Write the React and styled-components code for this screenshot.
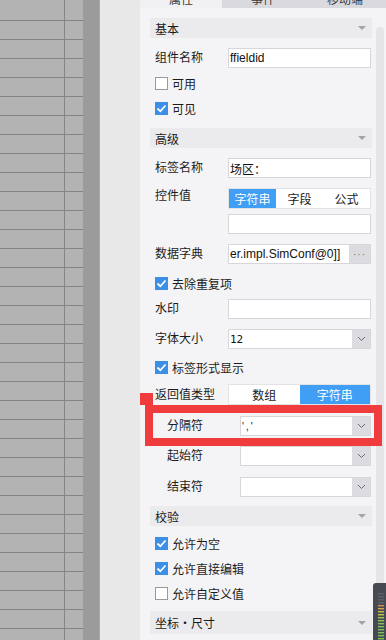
import React from 'react';
import styled, { createGlobalStyle } from 'styled-components';

const GlobalStyle = createGlobalStyle`
  html, body {
    margin: 0;
    padding: 0;
  }
  body {
    font-family: "Liberation Sans", "Noto Sans CJK SC", sans-serif;
  }
`;

const FONT = '"Liberation Sans", "Noto Sans CJK SC", sans-serif';
const BLUE = '#409ef5';

const Page = styled.div`
  position: relative;
  display: flex;
  width: 386px;
  height: 640px;
  overflow: hidden;
  background: #e8e8e8;
  font-family: ${FONT};
  font-size: 12px;
  color: #1c1c1c;
`;

const Sheet = styled.div`
  width: 83px;
  flex-shrink: 0;
  display: flex;
  flex-direction: column;
  background: #b3b3b3;
`;

const SheetRow = styled.div`
  display: flex;
  flex-shrink: 0;
  height: ${(p) => (p.$first ? 20 : 18)}px;
  border-bottom: 1px solid #858585;
`;

const SheetCell = styled.div`
  width: ${(p) => p.$w}px;
  flex-shrink: 0;
  border-right: ${(p) => (p.$line ? '1px solid #858585' : 'none')};
`;

const Strip = styled.div`
  width: 16px;
  flex-shrink: 0;
  background: #9b9b9b;
  border-right: 1px solid #a9a9a9;
`;

const Gutter = styled.div`
  width: 40px;
  flex-shrink: 0;
  background: #e8e8e8;
`;

const Panel = styled.div`
  flex: 1;
  display: flex;
  flex-direction: column;
  background: #f4f4f6;
  min-width: 0;
`;

const Tabs = styled.div`
  display: flex;
  height: 8px;
  flex-shrink: 0;
`;

const Tab = styled.div`
  flex: 1;
  display: flex;
  justify-content: center;
  align-items: flex-end;
  overflow: hidden;
  background: ${(p) => (p.$active ? '#f1f1f3' : '#dadade')};
  color: #3a3a3a;
  span {
    line-height: 12px;
    margin-bottom: 2px;
    white-space: nowrap;
  }
`;

const Body = styled.div`
  flex: 1;
  display: flex;
  min-height: 0;
`;

const Content = styled.div`
  width: 222px;
  padding: 0 4px 0 10px;
  display: flex;
  flex-direction: column;
`;

const ScrollTrack = styled.div`
  width: 8px;
  margin-top: 19px;
  background: #e5e5e8;
  border-radius: 4px 4px 0 0;
`;

const Header = styled.div`
  height: ${(p) => p.$h || 20}px;
  margin-top: ${(p) => p.$mt}px;
  flex-shrink: 0;
  display: flex;
  align-items: center;
  justify-content: space-between;
  padding: 0 6px 0 5px;
  background: #ebebed;
  color: #1a1a1a;
`;

const Caret = styled.span`
  width: 0;
  height: 0;
  border-left: 4px solid transparent;
  border-right: 4px solid transparent;
  border-top: 4px solid #a4a4a6;
`;

const FieldRow = styled.div`
  display: flex;
  align-items: ${(p) => (p.$top ? 'flex-start' : 'center')};
  margin-top: ${(p) => p.$mt}px;
  padding: 0 1px 0 ${(p) => (p.$indent ? 17 : 5)}px;
  flex-shrink: 0;
`;

const Label = styled.div`
  width: 73px;
  flex-shrink: 0;
  line-height: 14px;
  margin-top: ${(p) => (p.$top ? 1 : 0)}px;
  white-space: nowrap;
`;

const InputBox = styled.div`
  flex: 1;
  height: 20px;
  box-sizing: border-box;
  display: flex;
  align-items: center;
  border: 1px solid #d7d7db;
  background: #fff;
  overflow: hidden;
  min-width: 0;
`;

const InputText = styled.span`
  flex: 1;
  padding-left: ${(p) => (p.$pad ?? 1)}px;
  white-space: nowrap;
  overflow: hidden;
  font-size: ${(p) => p.$size || 12}px;
  font-family: ${(p) => p.$font || FONT};
  letter-spacing: ${(p) => p.$spacing || 0}px;
  color: #111;
`;

const SideButton = styled.div`
  width: ${(p) => p.$w || 18}px;
  height: 18px;
  flex-shrink: 0;
  display: flex;
  align-items: center;
  justify-content: center;
  background: #dcdce0;
  color: #777;
  font-size: 10px;
  letter-spacing: 1px;
`;

const Toggle = styled.div`
  flex: 1;
  height: 21px;
  box-sizing: border-box;
  display: flex;
  border: 1px solid #e3e3e6;
  background: #fff;
`;

const Segment = styled.div`
  flex: 1;
  display: flex;
  align-items: center;
  justify-content: center;
  background: ${(p) => (p.$active ? BLUE : '#fff')};
  color: ${(p) => (p.$active ? '#fff' : '#1a1a1a')};
`;

const CheckRow = styled.div`
  display: flex;
  align-items: center;
  gap: 4px;
  height: 13px;
  margin-top: ${(p) => p.$mt}px;
  padding-left: 5px;
  flex-shrink: 0;
  white-space: nowrap;
`;

const Box = styled.span`
  width: 13px;
  height: 13px;
  box-sizing: border-box;
  flex-shrink: 0;
  display: flex;
  align-items: center;
  justify-content: center;
  background: ${(p) => (p.$on ? '#3b8fe6' : '#fff')};
  border: 1px solid ${(p) => (p.$on ? '#3b8fe6' : '#9a9a9c')};
`;

const Annotation = styled.div`
  position: absolute;
  left: 145px;
  top: 405px;
  width: 237px;
  height: 41px;
  box-sizing: border-box;
  border: 8px solid #f03c3c;
  pointer-events: none;
`;

const AnnotationTab = styled.div`
  position: absolute;
  left: 140px;
  top: 393px;
  width: 13px;
  height: 12px;
  background: #f03c3c;
`;

const Meter = styled.div`
  position: absolute;
  left: 373px;
  top: 583px;
  width: 13px;
  height: 57px;
  background: #474a52;
  border-radius: 3px 0 0 0;
`;

const Chevron = () => (
  <svg width="9" height="6" viewBox="0 0 9 6">
    <path d="M1 1l3.5 3.5L8 1" fill="none" stroke="#6c6c6e" strokeWidth="1" />
  </svg>
);

const Tick = () => (
  <svg width="11" height="9" viewBox="0 0 11 9">
    <path d="M1.5 4.5l2.8 2.8L9.5 1.5" fill="none" stroke="#fff" strokeWidth="1.8" />
  </svg>
);

const Check = ({ on, text, mt }) => (
  <CheckRow $mt={mt}>
    <Box $on={on}>{on && <Tick />}</Box>
    <span>{text}</span>
  </CheckRow>
);

const Field = ({ label, mt, indent, children }) => (
  <FieldRow $mt={mt} $indent={indent}>
    <Label>{label}</Label>
    {children}
  </FieldRow>
);

const Select = ({ value, size, font, spacing }) => (
  <InputBox>
    <InputText $size={size} $font={font} $spacing={spacing}>{value}</InputText>
    <SideButton>
      <Chevron />
    </SideButton>
  </InputBox>
);

const meterColors = [
  '#5d6068', '#5d6068', '#5d6068', '#5d6068',
  '#d98c48', '#d9a14a', '#cbbf4a', '#c4c64c', '#a9c653',
  '#8fc457', '#7fc25a', '#7fc25a', '#7fc25a', '#7fc25a', '#7fc25a', '#7fc25a',
];

const LevelMeter = () => (
  <Meter>
    <svg width="13" height="57" viewBox="0 0 13 57">
      {meterColors.map((c, i) => (
        <rect key={i} x="5" y={10 + i * 3} width="6" height="1.4" fill={c} />
      ))}
    </svg>
  </Meter>
);

const sheetRows = Array.from({ length: 34 }, (_, i) => i);

export default function App() {
  return (
    <>
      <GlobalStyle />
      <Page>
        <Sheet>
          {sheetRows.map((i) => (
            <SheetRow key={i} $first={i === 0}>
              <SheetCell $w={64} $line />
              <SheetCell $w={19} />
            </SheetRow>
          ))}
        </Sheet>
        <Strip />
        <Gutter />
        <Panel>
          <Tabs>
            <Tab $active><span>属性</span></Tab>
            <Tab><span>事件</span></Tab>
            <Tab><span>移动端</span></Tab>
          </Tabs>
          <Body>
            <Content>
              <Header $mt={10}>基本<Caret /></Header>
              <Field label="组件名称" mt={10}>
                <InputBox><InputText>ffieldid</InputText></InputBox>
              </Field>
              <Check text="可用" mt={9} />
              <Check on text="可见" mt={12} />

              <Header $mt={13}>高级<Caret /></Header>
              <Field label="标签名称" mt={10}>
                <InputBox><InputText>场区：</InputText></InputBox>
              </Field>
              <FieldRow $mt={10} $top>
                <Label $top>控件值</Label>
                <Toggle>
                  <Segment $active>字符串</Segment>
                  <Segment>字段</Segment>
                  <Segment>公式</Segment>
                </Toggle>
              </FieldRow>
              <Field label="" mt={5}>
                <InputBox />
              </Field>
              <Field label="数据字典" mt={10}>
                <InputBox>
                  <InputText>er.impl.SimConf@0]]</InputText>
                  <SideButton $w={21}>···</SideButton>
                </InputBox>
              </Field>
              <Check on text="去除重复项" mt={13} />
              <Field label="水印" mt={9}>
                <InputBox />
              </Field>
              <Field label="字体大小" mt={10}>
                <Select value="12" size={11} font={'"DejaVu Sans Mono", monospace'} />
              </Field>
              <Check on text="标签形式显示" mt={12} />
              <Field label="返回值类型" mt={10}>
                <Toggle>
                  <Segment>数组</Segment>
                  <Segment $active>字符串</Segment>
                </Toggle>
              </Field>
              <Field label="分隔符" mt={11} indent>
                <Select value="','" size={10} spacing={2} />
              </Field>
              <Field label="起始符" mt={10} indent>
                <Select value="" />
              </Field>
              <Field label="结束符" mt={11} indent>
                <Select value="" />
              </Field>

              <Header $mt={9}>校验<Caret /></Header>
              <Check on text="允许为空" mt={11} />
              <Check on text="允许直接编辑" mt={12} />
              <Check text="允许自定义值" mt={12} />

              <Header $mt={11} $h={23}>坐标・尺寸<Caret /></Header>
            </Content>
            <ScrollTrack />
          </Body>
        </Panel>
        <AnnotationTab />
        <Annotation />
        <LevelMeter />
      </Page>
    </>
  );
}
